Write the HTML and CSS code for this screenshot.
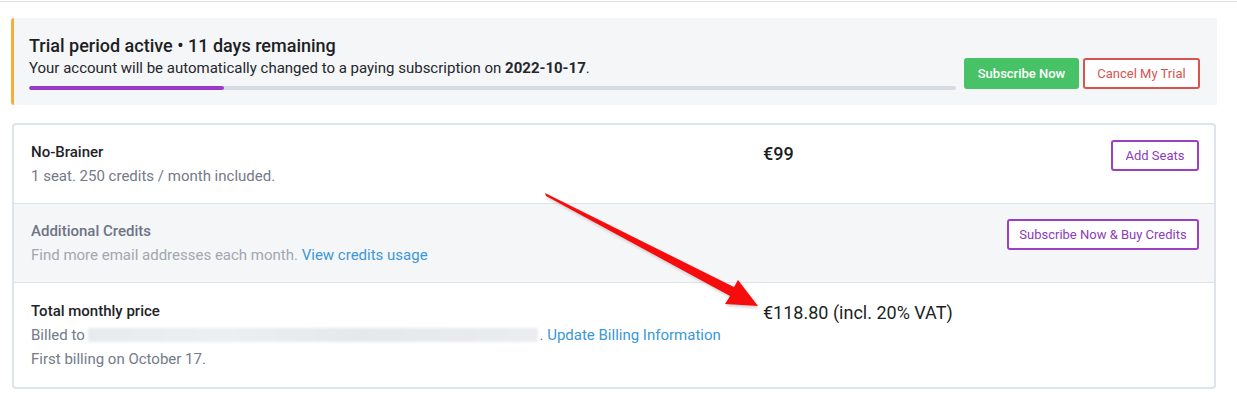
FILE: index.html
```html
<!DOCTYPE html>
<html lang="en">
<head>
<meta charset="utf-8">
<title>Billing</title>
<link rel="stylesheet" href="styles.css">
</head>
<body>
<div class="topline"></div>
<main class="page">
  <section class="trial">
    <div class="trial-info">
      <h2 class="trial-title">Trial period active • 11 days remaining</h2>
      <p class="trial-sub">Your account will be automatically changed to a paying subscription on <strong>2022-10-17</strong>.</p>
      <div class="progress"><div class="progress-fill" style="width: 21%"></div></div>
    </div>
    <div class="trial-actions">
      <button class="btn btn-green">Subscribe Now</button>
      <button class="btn btn-red">Cancel My Trial</button>
    </div>
  </section>

  <section class="card">
    <div class="row">
      <div class="col-text">
        <div class="row-title">No-Brainer</div>
        <div class="row-sub">1 seat. 250 credits / month included.</div>
      </div>
      <div class="col-price">€99</div>
      <div class="col-action"><button class="btn btn-purple btn-seats">Add Seats</button></div>
    </div>
    <div class="row row-muted">
      <div class="col-text">
        <div class="row-title muted-title">Additional Credits</div>
        <div class="row-sub muted-sub">Find more email addresses each month. <a class="link" href="#">View credits usage</a></div>
      </div>
      <div class="col-price"></div>
      <div class="col-action"><button class="btn btn-purple btn-credits">Subscribe Now &amp; Buy Credits</button></div>
    </div>
    <div class="row row-last">
      <div class="col-text">
        <div class="row-title">Total monthly price</div>
        <div class="row-sub">Billed to <span class="blurred" aria-hidden="true"></span>. <a class="link" href="#">Update Billing Information</a></div>
        <div class="row-sub">First billing on October 17.</div>
      </div>
      <div class="col-price col-price-total">€118.80 (incl. 20% VAT)</div>
      <div class="col-action"></div>
    </div>
  </section>
</main>

<svg class="arrow" width="1237" height="412" viewBox="0 0 1237 412" aria-hidden="true">
  <defs>
    <filter id="sh" x="-10%" y="-10%" width="120%" height="130%">
      <feDropShadow dx="1" dy="2" stdDeviation="1.5" flood-color="#000" flood-opacity="0.18"/>
    </filter>
  </defs>
  <polygon filter="url(#sh)" fill="#f50f0f" points="545,193 734,287 738,280 758,306 725,304 730,296 546,196"/>
</svg>
</body>
</html>
```

FILE: styles.css
```css
* { box-sizing: border-box; }

html, body {
  margin: 0;
  padding: 0;
  background: #ffffff;
}

body {
  position: relative;
  width: 1237px;
  height: 412px;
  overflow: hidden;
  font-family: "Roboto", "Liberation Sans", sans-serif;
  color: #1f2329;
}

.topline {
  height: 1px;
  margin-top: 1px;
  background: #dedfe2;
}

.page {
  padding: 16px 20px 0 11px;
}

/* Trial banner */
.trial {
  display: flex;
  align-items: flex-end;
  gap: 8px;
  height: 87px;
  padding: 17px 17px 15px 15px;
  background: #f5f6f8;
  border-left: 3px solid #f6ae3b;
  border-radius: 3px 0 0 3px;
}

.trial-info {
  flex: 1;
  min-width: 0;
}

.trial-title {
  margin: 0;
  font-size: 18px;
  line-height: 22px;
  font-weight: 500;
  color: #1c1f24;
}

.trial-sub {
  margin: 0;
  font-size: 15px;
  line-height: 22px;
  color: #24272c;
}

.trial-sub strong {
  font-weight: 700;
}

.progress {
  margin-top: 7px;
  height: 4px;
  border-radius: 2px;
  background: #d6dae3;
  overflow: hidden;
}

.progress-fill {
  height: 100%;
  background: #9a38c9;
  border-radius: 2px;
}

.trial-actions {
  display: flex;
  gap: 4px;
  margin-bottom: 1px;
}

/* Buttons */
.btn {
  font-family: "Roboto", "Liberation Sans", sans-serif;
  font-size: 13px;
  height: 31px;
  border-radius: 3px;
  padding: 0;
  cursor: pointer;
  white-space: nowrap;
}

.btn-green {
  width: 115px;
  background: #47c266;
  border: 2px solid #47c266;
  color: #ffffff;
  font-weight: 500;
}

.btn-red {
  width: 117px;
  background: #ffffff;
  border: 2px solid #d9534f;
  color: #d9534f;
}

.btn-purple {
  background: #ffffff;
  border: 2px solid #9b3fc3;
  color: #8e3bb8;
  margin-top: -2px;
}

.btn-seats {
  width: 88px;
}

.btn-credits {
  width: 192px;
}

/* Card */
.card {
  margin: 18px 1px 0 1px;
  border: 2px solid #dfe3ea;
  border-radius: 4px;
  overflow: hidden;
}

.row {
  display: grid;
  grid-template-columns: 732px 1fr auto;
  padding: 17px 15px 17px 17px;
  border-top: 1px solid #dfe2e8;
}

.row:first-child {
  border-top: none;
}

.row-last {
  padding-top: 18px;
  padding-bottom: 18px;
}

.row-muted {
  background: #f5f6f8;
}

.row-title {
  font-size: 15px;
  line-height: 20px;
  font-weight: 500;
  color: #1f2329;
}

.row-sub {
  margin-top: 4px;
  font-size: 15px;
  line-height: 20px;
  color: #737a88;
}

.muted-title {
  color: #6d7485;
}

.muted-sub {
  color: #a2a7b1;
}

.link {
  color: #3a98d8;
  text-decoration: none;
}

.blurred {
  display: inline-block;
  vertical-align: middle;
  width: 450px;
  height: 14px;
  margin: -2px 1px 0 0;
  background: linear-gradient(90deg, #e9eaed 0%, #eceef0 30%, #e6e7ea 60%, #ebecef 100%);
  filter: blur(1.5px);
  border-radius: 2px;
}

.col-price {
  font-size: 18px;
  line-height: 24px;
  font-weight: 500;
  color: #1c1f24;
}

.col-price-total {
  font-weight: 400;
}

.col-action {
  display: flex;
  justify-content: flex-end;
  align-items: flex-start;
}

/* Overlay arrow */
.arrow {
  position: absolute;
  left: 0;
  top: 0;
  pointer-events: none;
}
```
